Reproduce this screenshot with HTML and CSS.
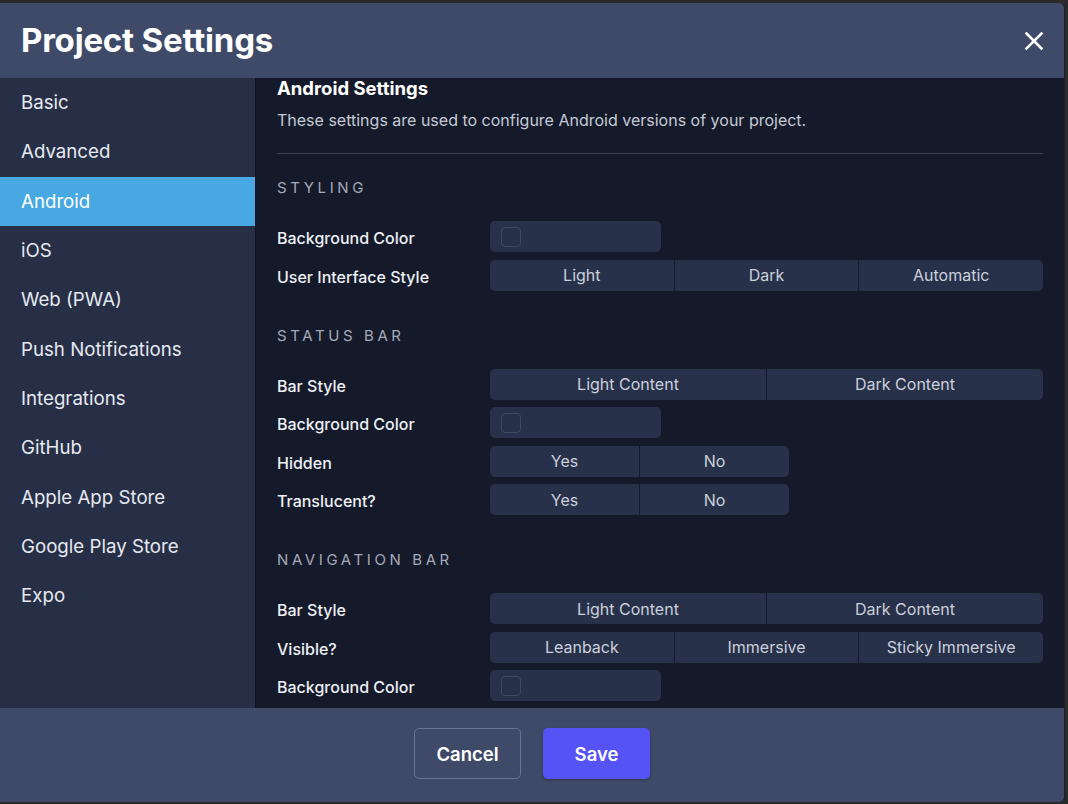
FILE: index.html
```html
<!DOCTYPE html>
<html>
<head>
<meta charset="utf-8">
<link rel="stylesheet" href="styles.css">
</head>
<body>
<div class="modal">
  <header class="head">
    <h1 class="title">Project Settings</h1>
    <button class="close" aria-label="Close">
      <svg width="20" height="20" viewBox="0 0 20 20"><path d="M2.5 2.5 L17.5 17.5 M17.5 2.5 L2.5 17.5" stroke="#fff" stroke-width="2.6" stroke-linecap="square" fill="none"/></svg>
    </button>
  </header>
  <div class="body">
    <nav class="side">
      <div class="item">Basic</div>
      <div class="item">Advanced</div>
      <div class="item active">Android</div>
      <div class="item">iOS</div>
      <div class="item">Web (PWA)</div>
      <div class="item">Push Notifications</div>
      <div class="item">Integrations</div>
      <div class="item">GitHub</div>
      <div class="item">Apple App Store</div>
      <div class="item">Google Play Store</div>
      <div class="item">Expo</div>
    </nav>
    <main class="content">
      <h2 class="ptitle">Android Settings</h2>
      <p class="desc">These settings are used to configure Android versions of your project.</p>
      <hr class="rule">

      <h3 class="sec">STYLING</h3>
      <div class="rows">
        <div class="label">Background Color</div>
        <div class="ctl"><div class="color"><span class="swatch"></span></div></div>
        <div class="label">User Interface Style</div>
        <div class="ctl"><div class="seg"><span>Light</span><span>Dark</span><span>Automatic</span></div></div>
      </div>

      <h3 class="sec sec2">STATUS BAR</h3>
      <div class="rows">
        <div class="label">Bar Style</div>
        <div class="ctl"><div class="seg"><span>Light Content</span><span>Dark Content</span></div></div>
        <div class="label">Background Color</div>
        <div class="ctl"><div class="color"><span class="swatch"></span></div></div>
        <div class="label">Hidden</div>
        <div class="ctl"><div class="seg small"><span>Yes</span><span>No</span></div></div>
        <div class="label">Translucent?</div>
        <div class="ctl"><div class="seg small"><span>Yes</span><span>No</span></div></div>
      </div>

      <h3 class="sec sec2">NAVIGATION BAR</h3>
      <div class="rows">
        <div class="label">Bar Style</div>
        <div class="ctl"><div class="seg"><span>Light Content</span><span>Dark Content</span></div></div>
        <div class="label">Visible?</div>
        <div class="ctl"><div class="seg"><span>Leanback</span><span>Immersive</span><span>Sticky Immersive</span></div></div>
        <div class="label">Background Color</div>
        <div class="ctl"><div class="color"><span class="swatch"></span></div></div>
      </div>
    </main>
  </div>
  <footer class="foot">
    <button class="btn cancel">Cancel</button>
    <button class="btn save">Save</button>
  </footer>
</div>
</body>
</html>
```
FILE: styles.css
```css
html, body {
  margin: 0;
  padding: 0;
  background: #2a2a2b;
  font-family: Inter, "Noto Sans", "Liberation Sans", sans-serif;
}
.modal {
  width: 1064px;
  height: 799px;
  margin-top: 3px;
  display: flex;
  flex-direction: column;
  border-radius: 0 5px 5px 0;
  overflow: hidden;
  box-shadow: 1px 0 0 #1c1f26, 0 1px 0 #1c1f26;
}
.head {
  height: 75px;
  flex: none;
  background: #3e4a68;
  display: flex;
  align-items: center;
  justify-content: space-between;
  padding: 0 20px 0 21px;
  box-sizing: border-box;
}
.title {
  margin: 0;
  color: #fff;
  font-size: 33px;
  font-weight: 700;
  letter-spacing: -0.2px;
  padding-bottom: 1px;
}
.close {
  background: none;
  border: 0;
  padding: 0;
  width: 20px;
  height: 20px;
  display: flex;
}
.body {
  flex: 1;
  display: flex;
  min-height: 0;
  overflow: hidden;
  background: #151a2a;
}
.side {
  flex: none;
  width: 256px;
  background: #272f47;
  border-right: 1px solid #0e111b;
  box-sizing: border-box;
}
.item {
  height: 49.3px;
  display: flex;
  align-items: center;
  padding-left: 21px;
  color: #e6e9f0;
  font-size: 18.7px;
}
.item.active {
  background: #47a8e2;
  color: #fff;
}
.content {
  flex: 1;
  padding: 0 21px;
  overflow: hidden;
}
.ptitle {
  margin: 0;
  line-height: 20px;
  font-size: 18.5px;
  font-weight: 700;
  color: #fff;
}
.desc {
  margin: 11px 0 0;
  line-height: 22px;
  font-size: 16px;
  color: #c5cad6;
}
.rule {
  margin: 22px 0 0;
  border: 0;
  border-top: 1px solid #3b4257;
  height: 0;
}
.sec {
  margin: 24px 0 23px;
  line-height: 20px;
  font-size: 15px;
  font-weight: 400;
  letter-spacing: 3.6px;
  color: #a3a9b8;
}
.sec2 {
  margin-top: 35px;
}
.rows {
  display: grid;
  grid-template-columns: 213px 1fr;
  row-gap: 7.5px;
}
.label {
  height: 31px;
  display: flex;
  align-items: center;
  padding-top: 3px;
  box-sizing: border-box;
  color: #eef0f5;
  font-size: 16px;
  font-weight: 500;
}
.ctl {
  height: 31px;
  display: flex;
}
.color {
  width: 171px;
  height: 31px;
  background: #28314a;
  border-radius: 5px;
  display: flex;
  align-items: center;
  padding-left: 11px;
  box-sizing: border-box;
}
.swatch {
  width: 20px;
  height: 20px;
  box-sizing: border-box;
  border: 1px solid #3e4968;
  border-radius: 4px;
  background: #28314a;
}
.seg {
  flex: 1;
  display: flex;
  border-radius: 5px;
  overflow: hidden;
}
.seg.small {
  flex: none;
  width: 299px;
}
.seg span {
  flex: 1;
  background: #28314a;
  display: flex;
  align-items: center;
  justify-content: center;
  color: #cbd0dc;
  font-size: 16px;
}
.seg span + span {
  border-left: 1px solid #151a2a;
}
.foot {
  height: 94px;
  flex: none;
  background: #3e4a68;
  display: flex;
  align-items: center;
  justify-content: center;
  gap: 22px;
  padding-bottom: 3px;
  box-sizing: border-box;
}
.btn {
  width: 107px;
  height: 51px;
  border-radius: 5px;
  font-family: Inter, "Noto Sans", "Liberation Sans", sans-serif;
  font-size: 18.5px;
  font-weight: 600;
  color: #fff;
  cursor: pointer;
}
.cancel {
  background: transparent;
  border: 1px solid #6a7490;
}
.save {
  background: #5552f6;
  border: 0;
  box-shadow: 0 1px 3px rgba(0,0,0,0.25);
}
```
